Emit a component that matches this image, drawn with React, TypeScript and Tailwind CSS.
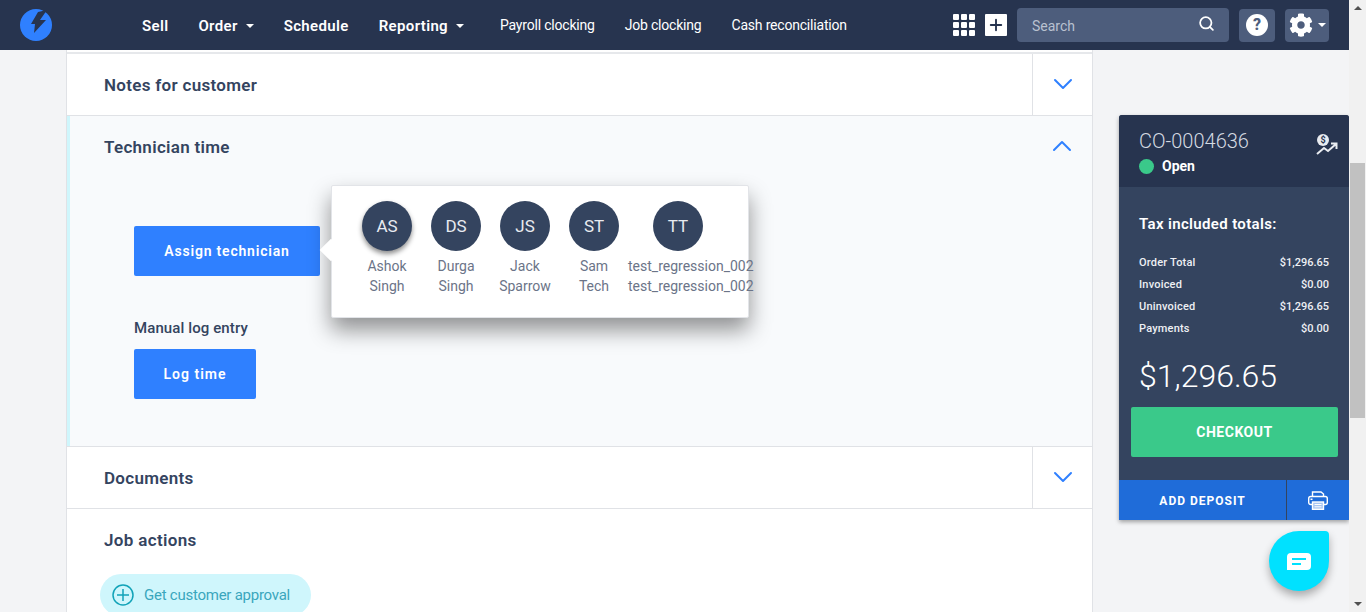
import { ChevronDown, ChevronUp, Plus, Search } from "lucide-react"
import { FaCog } from "react-icons/fa"

const font = "font-['Roboto',sans-serif]"

const Caret = () => <span className="ml-2 inline-block border-x-[4px] border-t-[4px] border-x-transparent border-t-white" />

const Logo = () => (
  <svg width="32" height="32" viewBox="0 0 32 32" className="ml-5 shrink-0">
    <circle cx="16" cy="16" r="16" fill="#2f80ff" />
    <polygon points="18,3 27,1 20,11 26,11 14,24 15,15 11,15" fill="#27344f" />
  </svg>
)

const Topbar = () => {
  return (
    <div className="flex h-[50px] shrink-0 items-center bg-[#27344f] text-white">
      <Logo />
      <div className="ml-[90px] flex items-center pt-[2px] text-[15px] font-semibold tracking-[0.35px]">
        <span>Sell</span>
        <span className="ml-[30px] flex items-center">Order<Caret /></span>
        <span className="ml-[30px]">Schedule</span>
        <span className="ml-[30px] flex items-center">Reporting<Caret /></span>
      </div>
      <div className="ml-[36px] flex gap-[30px] text-[14px] tracking-[-0.2px]">
        <span>Payroll clocking</span>
        <span>Job clocking</span>
        <span>Cash reconciliation</span>
      </div>
      <div className="ml-auto mr-5 flex items-center">
        <div className="grid grid-cols-3 gap-[2px]">
          {Array.from({ length: 9 }).map((_, i) => (
            <span key={i} className="h-[6px] w-[6px] rounded-[1px] bg-white" />
          ))}
        </div>
        <div className="ml-[10px] flex h-[22px] w-[22px] items-center justify-center rounded-[1px] bg-white">
          <Plus size={18} color="#27344f" strokeWidth={2.5} />
        </div>
        <div className="ml-[10px] flex h-[34px] w-[212px] items-center justify-between rounded bg-[#4d5d7c] pl-[15px] pr-[14px] pt-[2px] text-[14px] text-[#b9c1d0]">
          Search
          <Search size={17} color="white" strokeWidth={2.5} className="-mt-[6px]" />
        </div>
        <div className="ml-[10px] flex h-[33px] w-9 items-center justify-center rounded bg-[#4d5d7c]">
          <div className="flex h-[22px] w-[22px] items-center justify-center rounded-full bg-white text-[16px] font-extrabold text-[#4d5d7c]">?</div>
        </div>
        <div className="ml-[10px] flex h-[33px] w-11 items-center justify-center rounded bg-[#4d5d7c]">
          <FaCog size={24} color="white" />
          <span className="ml-[5px] inline-block border-x-[4px] border-t-[4px] border-x-transparent border-t-white" />
        </div>
      </div>
    </div>
  )
}

const Section = ({ title, open = false }: { title: string; open?: boolean }) => {
  return (
    <div className="flex h-[61px] items-center justify-between">
      <div className="pl-[37px] pt-[2px] text-[17px] font-semibold tracking-[0.3px] text-[#34445f]">{title}</div>
      <div className={`flex h-full w-[60px] items-center justify-center ${open ? "" : "border-l border-[#e0e2e6]"}`}>
        {open ? (
          <ChevronUp size={32} color="#2f80ff" strokeWidth={1.5} className="-mt-[2px]" />
        ) : (
          <ChevronDown size={32} color="#2f80ff" strokeWidth={1.5} className="-mt-[2px]" />
        )}
      </div>
    </div>
  )
}

const people = [
  { initials: "AS", first: "Ashok", last: "Singh", shadow: true },
  { initials: "DS", first: "Durga", last: "Singh" },
  { initials: "JS", first: "Jack", last: "Sparrow" },
  { initials: "ST", first: "Sam", last: "Tech" },
  { initials: "TT", first: "test_regression_002", last: "test_regression_002" },
]

const Popover = () => {
  return (
    <div className="absolute left-[261px] top-[69px] h-[133px] w-[418px] rounded-[2px] border border-[#e2e4e8] bg-white shadow-[0_12px_22px_rgba(0,0,0,0.42)]">
      <span className="absolute -left-[9px] top-[56px] h-4 w-4 rotate-45 bg-white" />
      <div className="relative flex gap-[19px] pl-[30px] pt-[15px]">
        {people.map((p) => (
          <div
            key={p.initials}
            className={`flex flex-col items-center text-[14px] leading-[20px] text-[#6b7488] ${p.initials === "TT" ? "-ml-[10px]" : "w-[50px]"}`}
          >
            <div className={`mb-[5px] flex h-[50px] w-[50px] shrink-0 items-center justify-center rounded-full bg-[#34445f] text-[17px] text-[#e8ebf0] ${p.shadow ? "shadow-[0_3px_5px_rgba(0,0,0,0.45)]" : ""} ${p.initials === "TT" ? "ml-[25px] self-start" : ""}`}>
              {p.initials}
            </div>
            <span className="whitespace-nowrap">{p.first}</span>
            <span className="whitespace-nowrap">{p.last}</span>
          </div>
        ))}
      </div>
    </div>
  )
}

const Technician = () => {
  return (
    <div className="relative h-[330px] border-l-[3px] border-[#cff6fc] bg-[#f8fafc]">
      <div className="-ml-[3px]">
        <Section title="Technician time" open />
      </div>
      <div className="pl-[64px] pt-[49px]">
        <button className="flex h-[50px] w-[186px] items-center justify-center rounded-[2px] bg-[#2f80ff] text-[14px] font-semibold tracking-[0.8px] text-white">Assign technician</button>
        <div className="mt-[42px] text-[15px] font-medium leading-[20px] tracking-[0.1px] text-[#34445f]">Manual log entry</div>
        <button className="mt-[11px] flex h-[50px] w-[122px] items-center justify-center rounded-[2px] bg-[#2f80ff] text-[14px] font-semibold tracking-[1px] text-white">Log time</button>
      </div>
      <Popover />
    </div>
  )
}

const Totals = () => {
  const rows = [
    ["Order Total", "$1,296.65"],
    ["Invoiced", "$0.00"],
    ["Uninvoiced", "$1,296.65"],
    ["Payments", "$0.00"],
  ]
  return (
    <div className="mt-[65px] h-[405px] w-[230px] shrink-0 self-start overflow-hidden rounded-t-[3px] bg-[#34445f] text-white shadow-[0_2px_4px_rgba(0,0,0,0.35)]">
      <div className="relative h-[72px] bg-[#27344f] pl-5 pt-[13px]">
        <div className="text-[20px] font-light leading-[26px] text-[#d5dae2]">CO-0004636</div>
        <div className="mt-[2px] flex items-center text-[14px] font-bold leading-[20px]">
          <span className="mr-2 h-[15px] w-[15px] rounded-full bg-[#3ac98a]" />
          Open
        </div>
        <svg width="22" height="24" viewBox="0 0 22 24" className="absolute right-[11px] top-[18px]">
          <circle cx="7" cy="7" r="6" fill="#e8ebf0" />
          <text x="7" y="10" textAnchor="middle" fontSize="9" fontWeight="700" fill="#27344f">$</text>
          <path d="M1 21 L8 15 L12 18 L20 11 M15 10.5 H20.5 V16" fill="none" stroke="#e8ebf0" strokeWidth="2" />
        </svg>
      </div>
      <div className="px-5 pt-[27px]">
        <div className="text-[15px] font-semibold leading-[20px] tracking-[0.35px]">Tax included totals:</div>
        <div className="mt-[18px] flex flex-col gap-0">
          {rows.map(([label, value]) => (
            <div key={label} className="flex h-[22px] items-center justify-between text-[11px] font-medium text-[#eef0f4]">
              <span className="tracking-[0.2px]">{label}</span>
              <span>{value}</span>
            </div>
          ))}
        </div>
        <div className="mt-[16px] text-[32px] font-light leading-[40px]">$1,296.65</div>
      </div>
      <div className="px-3 pt-[11px]">
        <div className="flex h-[50px] w-[207px] items-center justify-center rounded-[2px] bg-[#3ac98a] text-[14px] font-bold tracking-[0.5px]">CHECKOUT</div>
      </div>
      <div className="mt-[23px] flex h-10 bg-[#1f6cd9]">
        <div className="flex w-[167px] items-center justify-center pt-[1px] text-[12px] font-bold tracking-[1px]">ADD DEPOSIT</div>
        <div className="flex flex-1 items-center justify-center border-l border-[#34445f]">
          <svg width="20" height="19" viewBox="0 0 20 19" fill="none">
            <path d="M4.5 6V1H13L15.5 3V6" stroke="white" strokeWidth="1.4" />
            <rect x="0.7" y="5.5" width="18.6" height="8" rx="2" fill="#1f6cd9" stroke="white" strokeWidth="1.4" />
            <rect x="2.5" y="7.5" width="2" height="1.5" fill="white" />
            <rect x="4.5" y="11" width="11" height="7.3" fill="#a9c6f2" stroke="white" strokeWidth="1.4" />
            <path d="M6.5 13.5H13.5M6.5 15.8H13.5" stroke="white" strokeWidth="1" />
          </svg>
        </div>
      </div>
    </div>
  )
}

const ChatBubble = () => (
  <div className="absolute left-[1269px] top-[481px] flex h-[60px] w-[60px] items-center justify-center rounded-[50%_4px_50%_50%] bg-[#00e1ff] shadow-[0_5px_8px_rgba(0,0,0,0.3)]">
    <svg width="24" height="17" viewBox="0 0 24 17">
      <path d="M4 0H20A4 4 0 0 1 24 4V13A4 4 0 0 1 20 17H0V4A4 4 0 0 1 4 0Z" fill="white" />
      <rect x="5" y="5" width="14" height="2" fill="#00e1ff" />
      <rect x="5" y="10" width="9" height="2" fill="#00e1ff" />
    </svg>
  </div>
)

const Scrollbar = () => (
  <div className="relative flex h-full w-[17px] shrink-0 flex-col items-center bg-[#f1f1f1]">
    <span className="mt-[6px] border-x-[4px] border-b-[4px] border-x-transparent border-b-[#505050]" />
    <span className="mt-[153px] h-[255px] w-[15px] bg-[#c1c1c1]" />
    <span className="mt-auto mb-[6px] border-x-[4px] border-t-[4px] border-x-transparent border-t-[#505050]" />
  </div>
)

export default function App() {
  return (
    <div className={`flex h-[612px] overflow-hidden bg-[#f3f4f6] ${font}`}>
      <div className="flex min-w-0 flex-1 flex-col">
        <Topbar />
        <div className="relative flex min-h-0 flex-1">
          <div className="ml-[66px] h-full w-[1027px] shrink-0 border-x border-[#e0e2e6] bg-white">
            <div className="h-[4px] border-b-2 border-[#e6e8eb]" />
            <Section title="Notes for customer" />
            <div className="border-y border-[#e0e2e6]">
              <Technician />
            </div>
            <Section title="Documents" />
            <div className="border-t border-[#e0e2e6] pl-[37px] pt-[19px] text-[17px] font-semibold leading-[24px] tracking-[0.35px] text-[#34445f]">Job actions</div>
            <div className="ml-[33px] mt-[22px] flex h-[42px] w-[211px] items-center rounded-full bg-[#cff6fc] pl-3 text-[15px] tracking-[-0.25px] text-[#3aa6bd]">
              <svg width="22" height="22" viewBox="0 0 22 22" className="mr-[10px]">
                <circle cx="11" cy="11" r="10" fill="none" stroke="#12a3b8" strokeWidth="1.5" />
                <path d="M11 5V17M5 11H17" stroke="#12a3b8" strokeWidth="1.5" />
              </svg>
              Get customer approval
            </div>
          </div>
          <div className="ml-[26px]">
            <Totals />
          </div>
          <ChatBubble />
        </div>
      </div>
      <Scrollbar />
    </div>
  )
}
